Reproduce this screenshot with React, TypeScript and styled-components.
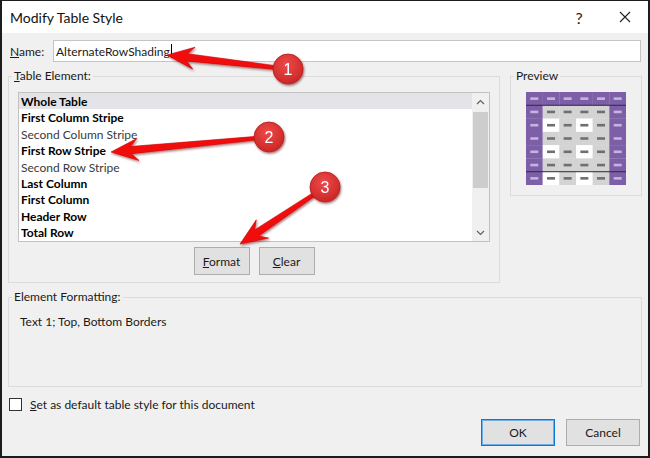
import React from "react";
import styled, { createGlobalStyle } from "styled-components";

const GlobalStyle = createGlobalStyle`
  html, body {
    margin: 0;
    padding: 0;
    background: #ffffff;
  }
  * {
    box-sizing: border-box;
  }
`;

const UI_FONT = `"Segoe UI", Lato, "Liberation Sans", sans-serif`;

// Page wrapper holds the dialog and the annotation layer on top of it
const Page = styled.div`
  position: relative;
  width: 650px;
  height: 458px;
  font-family: ${UI_FONT};
  font-size: 12px;
  color: #1a1a1a;
`;

const Dialog = styled.div`
  width: 650px;
  height: 458px;
  border: 2px solid #1c1c1c;
  border-top-width: 1px;
  background: #f0f0f0;
  display: flex;
  flex-direction: column;
`;

const TitleBar = styled.div`
  height: 32px;
  background: #ffffff;
  display: flex;
  align-items: center;
  padding-left: 8px;
`;

const Title = styled.div`
  flex: 1;
  font-size: 14px;
  color: #111;
`;

const TitleButton = styled.div`
  width: 46px;
  height: 32px;
  display: flex;
  align-items: center;
  justify-content: center;
  font-size: 16px;
  color: #222;
`;

const Body = styled.div`
  flex: 1;
  padding: 0 6px;
  display: flex;
  flex-direction: column;
`;

const NameRow = styled.div`
  margin-top: 7px;
  height: 22px;
  display: flex;
  align-items: center;
`;

const NameLabel = styled.label`
  width: 45px;
  padding-left: 2px;
`;

const TextInput = styled.div`
  flex: 1;
  height: 22px;
  margin-right: 1px;
  background: #fff;
  border: 1px solid #c4c4c4;
  display: flex;
  align-items: center;
  padding-left: 2px;
`;

const Caret = styled.span`
  display: inline-block;
  width: 1px;
  height: 14px;
  background: #000;
  margin-left: 1px;
`;

const MainRow = styled.div`
  margin-top: 6px;
  display: grid;
  grid-template-columns: 492px 132px;
  column-gap: 10px;
  align-items: start;
`;

const Group = styled.fieldset<{ $padLeft?: number; $padBottom?: number; $gapTop?: number }>`
  margin: ${(p) => p.$gapTop ?? 0}px 0 0;
  min-width: 0;
  border: 1px solid #dcdcdc;
  padding: 0 9px ${(p) => p.$padBottom ?? 8}px ${(p) => p.$padLeft ?? 9}px;
`;

const Legend = styled.legend<{ $shift?: number }>`
  padding: 0 2px;
  margin-left: ${(p) => p.$shift ?? -6}px;
  line-height: 16px;
  color: #1a1a1a;
`;

const ListBox = styled.div`
  margin-top: 8px;
  height: 150px;
  background: #fff;
  border: 1px solid #c2c2c2;
  display: flex;
`;

const ListItems = styled.div`
  flex: 1;
  display: flex;
  flex-direction: column;
`;

const ListItem = styled.div<{ $bold?: boolean; $selected?: boolean }>`
  height: 16.4px;
  line-height: 17.4px;
  padding-left: 2px;
  font-weight: ${(p) => (p.$bold ? 700 : 400)};
  color: ${(p) => (p.$bold ? "#000" : "#3a3a3a")};
  background: ${(p) => (p.$selected ? "#e3e3e8" : "transparent")};
  white-space: nowrap;
`;

const ScrollBar = styled.div`
  width: 17px;
  background: #f0f0f0;
  display: flex;
  flex-direction: column;
`;

const ScrollArrow = styled.div`
  height: 17px;
  display: flex;
  align-items: center;
  justify-content: center;
`;

const ScrollTrack = styled.div`
  flex: 1;
  padding: 2px 1px 0;
`;

const Thumb = styled.div`
  height: 76px;
  background: #cdcdcd;
`;

const ButtonRow = styled.div`
  display: flex;
  justify-content: center;
  gap: 9px;
  margin-top: 5px;
`;

const Button = styled.div<{ $w: number; $h: number; $default?: boolean }>`
  width: ${(p) => p.$w}px;
  height: ${(p) => p.$h}px;
  background: #e1e1e1;
  border: 1px solid ${(p) => (p.$default ? "#0a78d7" : "#adadad")};
  box-shadow: ${(p) => (p.$default ? "inset 0 0 0 1px #6fb0ea" : "none")};
  display: flex;
  align-items: center;
  justify-content: center;
  color: #1a1a1a;
`;

const PreviewBox = styled.div`
  margin: 8px auto 0;
  width: 100px;
  height: 93px;
`;

const FormatText = styled.div`
  margin-top: 9px;
  line-height: 16px;
`;

const CheckRow = styled.div`
  margin-top: 9px;
  height: 16px;
  display: flex;
  align-items: center;
  gap: 8px;
  padding-left: 1px;
`;

const CheckBox = styled.div`
  width: 13px;
  height: 13px;
  background: #fff;
  border: 1px solid #333;
`;

const Footer = styled.div`
  margin-top: 7px;
  margin-right: 2px;
  display: flex;
  justify-content: flex-end;
  gap: 11px;
`;

const Overlay = styled.svg`
  position: absolute;
  left: 0;
  top: 0;
  width: 650px;
  height: 458px;
  pointer-events: none;
`;

const BadgeNumber = styled.text`
  font-family: "Liberation Sans", Arial, sans-serif;
  font-size: 16px;
  fill: #fff;
`;

const items = [
  { label: "Whole Table", bold: true, selected: true },
  { label: "First Column Stripe", bold: true },
  { label: "Second Column Stripe", bold: false },
  { label: "First Row Stripe", bold: true },
  { label: "Second Row Stripe", bold: false },
  { label: "Last Column", bold: true },
  { label: "First Column", bold: true },
  { label: "Header Row", bold: true },
  { label: "Total Row", bold: true },
];

const Chevron = ({ up }: { up?: boolean }) => (
  <svg width="9" height="6" viewBox="0 0 9 6">
    <path
      d={up ? "M1 5 L4.5 1.5 L8 5" : "M1 1 L4.5 4.5 L8 1"}
      fill="none"
      stroke="#606060"
      strokeWidth="1.2"
    />
  </svg>
);

// Table style preview thumbnail
const PreviewImage = () => {
  const cols = 6;
  const rows = 7;
  const cw = 100 / cols;
  const rh = 93 / rows;
  const purple = "#7c5fa6";
  const cells: React.ReactNode[] = [];
  for (let r = 0; r < rows; r++) {
    for (let c = 0; c < cols; c++) {
      const isPurple = r === 0 || c === 0 || c === cols - 1;
      let fill = purple;
      if (!isPurple) {
        const mid = c - 1;
        const whiteRow = r === 2 || r === 4 || r === 6;
        fill = whiteRow && (mid === 0 || mid === 2) ? "#ffffff" : "#d3d3d3";
      }
      const x = c * cw;
      const y = r * rh;
      cells.push(<rect key={`c${r}-${c}`} x={x} y={y} width={cw + 0.2} height={rh + 0.2} fill={fill} />);
      cells.push(
        <rect
          key={`d${r}-${c}`}
          x={x + cw / 2 - 4}
          y={y + rh / 2 - 1.3}
          width={8}
          height={2.6}
          fill={isPurple ? "#c6b3df" : "#6f6f6f"}
        />
      );
    }
  }
  return (
    <svg width="100" height="93" viewBox="0 0 100 93">
      {cells}
      <rect x="0" y={rh - 0.5} width="100" height="1" fill="#2e2440" />
      <rect x="0" y={rh * 6 - 0.5} width="100" height="1" fill="#2e2440" />
    </svg>
  );
};

// Build a tapered annotation arrow from start (s) to tip (t)
const arrowPath = (sx: number, sy: number, tx: number, ty: number) => {
  const dx = tx - sx;
  const dy = ty - sy;
  const len = Math.hypot(dx, dy);
  const ux = dx / len;
  const uy = dy / len;
  const nx = -uy;
  const ny = ux;
  const head = 27;
  const headW = 11;
  const w0 = 1.6;
  const w1 = 3.6;
  const bx = tx - ux * head;
  const by = ty - uy * head;
  const nbx = tx - ux * (head - 7);
  const nby = ty - uy * (head - 7);
  const pts = [
    [tx, ty],
    [bx + nx * headW, by + ny * headW],
    [nbx + nx * w1, nby + ny * w1],
    [sx + nx * w0, sy + ny * w0],
    [sx - nx * w0, sy - ny * w0],
    [nbx - nx * w1, nby - ny * w1],
    [bx - nx * headW, by - ny * headW],
  ];
  return pts.map((p) => `${p[0].toFixed(1)},${p[1].toFixed(1)}`).join(" ");
};

const callouts = [
  { n: 1, cx: 288, cy: 69, tx: 167, ty: 55 },
  { n: 2, cx: 269, cy: 137, tx: 111, ty: 152 },
  { n: 3, cx: 325, cy: 187, tx: 240, ty: 244 },
];

const Annotations = () => (
  <Overlay viewBox="0 0 650 458">
    <defs>
      <filter id="shadow" x="-20%" y="-20%" width="140%" height="140%">
        <feDropShadow dx="1" dy="1.5" stdDeviation="1.2" floodColor="#5a0000" floodOpacity="0.55" />
      </filter>
      <radialGradient id="badge" cx="45%" cy="35%" r="70%">
        <stop offset="0%" stopColor="#ee4b4b" />
        <stop offset="100%" stopColor="#c92323" />
      </radialGradient>
    </defs>
    {callouts.map((c) => (
      <polygon
        key={`a${c.n}`}
        points={arrowPath(c.cx, c.cy, c.tx, c.ty)}
        fill="#f20c0c"
        stroke="#d00000"
        strokeWidth="0.6"
        filter="url(#shadow)"
      />
    ))}
    {callouts.map((c) => (
      <g key={`b${c.n}`} filter="url(#shadow)">
        <circle cx={c.cx} cy={c.cy} r="15" fill="url(#badge)" stroke="#b81c1c" strokeWidth="0.8" />
        <BadgeNumber x={c.cx} y={c.cy + 6} textAnchor="middle">
          {c.n}
        </BadgeNumber>
      </g>
    ))}
  </Overlay>
);

export default function App() {
  return (
    <Page>
      <GlobalStyle />
      <Dialog>
        <TitleBar>
          <Title>Modify Table Style</Title>
          <TitleButton>?</TitleButton>
          <TitleButton>
            <svg width="12" height="12" viewBox="0 0 12 12">
              <path d="M1 1 L11 11 M11 1 L1 11" stroke="#222" strokeWidth="1.1" />
            </svg>
          </TitleButton>
        </TitleBar>

        <Body>
          <NameRow>
            <NameLabel>
              <u>N</u>ame:
            </NameLabel>
            <TextInput>
              AlternateRowShading
              <Caret />
            </TextInput>
          </NameRow>

          <MainRow>
            <Group $padBottom={7}>
              <Legend>
                <u>T</u>able Element:
              </Legend>
              <ListBox>
                <ListItems>
                  {items.map((it) => (
                    <ListItem key={it.label} $bold={it.bold} $selected={it.selected}>
                      {it.label}
                    </ListItem>
                  ))}
                </ListItems>
                <ScrollBar>
                  <ScrollArrow>
                    <Chevron up />
                  </ScrollArrow>
                  <ScrollTrack>
                    <Thumb />
                  </ScrollTrack>
                  <ScrollArrow>
                    <Chevron />
                  </ScrollArrow>
                </ScrollBar>
              </ListBox>
              <ButtonRow>
                <Button $w={56} $h={28}>
                  <span>
                    <u>F</u>ormat
                  </span>
                </Button>
                <Button $w={56} $h={28}>
                  <span>
                    <u>C</u>lear
                  </span>
                </Button>
              </ButtonRow>
            </Group>

            <Group $padBottom={10}>
              <Legend>Preview</Legend>
              <PreviewBox>
                <PreviewImage />
              </PreviewBox>
            </Group>
          </MainRow>

          <Group $padLeft={11} $padBottom={56} $gapTop={6}>
            <Legend $shift={-8}>Element Formatting:</Legend>
            <FormatText>Text 1; Top, Bottom Borders</FormatText>
          </Group>

          <CheckRow>
            <CheckBox />
            <span>
              <u>S</u>et as default table style for this document
            </span>
          </CheckRow>

          <Footer>
            <Button $w={74} $h={27} $default>
              OK
            </Button>
            <Button $w={74} $h={27}>
              Cancel
            </Button>
          </Footer>
        </Body>
      </Dialog>
      <Annotations />
    </Page>
  );
}
